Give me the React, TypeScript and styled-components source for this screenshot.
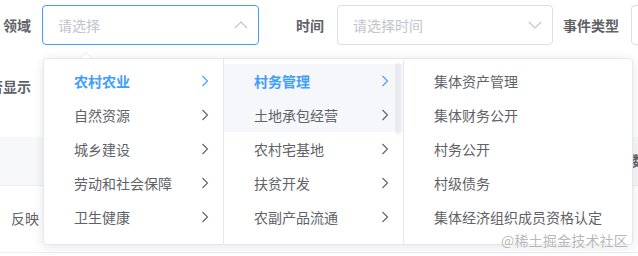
import React from "react";
import styled, { createGlobalStyle } from "styled-components";

const GlobalStyle = createGlobalStyle`
  html, body {
    margin: 0;
    padding: 0;
    background: #fff;
  }
  body {
    font-family: "Noto Sans CJK SC", "Noto Sans", sans-serif;
    font-size: 14px;
    color: #606266;
  }
`;

const Page = styled.div`
  position: relative;
  width: 638px;
  height: 256px;
  overflow: hidden;
`;

// filter bar
const FilterRow = styled.div`
  display: flex;
  align-items: center;
  height: 40px;
  padding-top: 5px;
`;

const Label = styled.span<any>`
  font-weight: 700;
  color: #606266;
  white-space: nowrap;
  margin-left: ${({ ml }) => ml || "0px"};
  margin-right: ${({ mr }) => mr || "12px"};
`;

const Select = styled.div<any>`
  box-sizing: border-box;
  display: flex;
  align-items: center;
  justify-content: space-between;
  flex-shrink: 0;
  width: ${({ width }) => width || "216px"};
  height: 40px;
  padding: 0 10px 0 15px;
  border: 1px solid ${({ focused }) => (focused ? "#409eff" : "#dcdfe6")};
  border-radius: 4px;
  color: #c0c4cc;
`;

const Placeholder = styled.span`
  color: #c0c4cc;
`;

// page behind the popper
const InfoRow = styled.div`
  height: 92px;
  display: flex;
  align-items: flex-start;
`;

const CutText = styled.span`
  margin-left: -25px;
  margin-top: 31px;
  font-weight: 700;
  color: #606266;
`;

const TableHead = styled.div`
  box-sizing: border-box;
  height: 49px;
  background: #f7f8fa;
  border-bottom: 1px solid #ebeef5;
  display: flex;
  align-items: center;
  justify-content: flex-end;
  color: #606266;
  font-weight: 700;
`;

const HeadCut = styled.span`
  margin-right: -8px;
  margin-top: -2px;
`;

const TableRow = styled.div`
  box-sizing: border-box;
  height: 67px;
  border-bottom: 1px solid #ebeef5;
  display: flex;
  align-items: center;
  padding-left: 11px;
  padding-bottom: 2px;
`;

// cascader popper
const Popper = styled.div`
  position: absolute;
  left: 43px;
  top: 58px;
  box-sizing: border-box;
  width: 590px;
  height: 187px;
  display: flex;
  background: #fff;
  border: 1px solid #e4e7ed;
  border-radius: 4px;
  box-shadow: 0 2px 12px 0 rgba(0, 0, 0, 0.1);
`;

const Arrow = styled.div`
  position: absolute;
  left: 36px;
  top: -7px;
  width: 0;
  height: 0;
  border-left: 6px solid transparent;
  border-right: 6px solid transparent;
  border-bottom: 6px solid #e4e7ed;
  &::after {
    content: "";
    position: absolute;
    left: -5px;
    top: 1px;
    border-left: 5px solid transparent;
    border-right: 5px solid transparent;
    border-bottom: 5px solid #fff;
  }
`;

const Menu = styled.div<any>`
  position: relative;
  box-sizing: border-box;
  width: ${({ width }) => width};
  height: 100%;
  overflow: hidden;
  border-right: ${({ last }) => (last ? "none" : "1px solid #e4e7ed")};
`;

const MenuList = styled.ul`
  list-style: none;
  margin: 0;
  padding: 5px 0;
`;

const Node = styled.li<any>`
  display: flex;
  align-items: center;
  justify-content: space-between;
  height: 34px;
  padding: 0 14px 0 30px;
  color: ${({ active }) => (active ? "#409eff" : "#606266")};
  font-weight: ${({ active }) => (active ? 700 : 400)};
  background: ${({ hover }) => (hover ? "#f5f7fa" : "transparent")};
  white-space: nowrap;
`;

const Thumb = styled.div`
  position: absolute;
  right: 2px;
  top: 4px;
  width: 6px;
  height: 72px;
  border-radius: 3px;
  background: rgba(144, 147, 153, 0.12);
`;

const Watermark = styled.div`
  position: absolute;
  right: 10px;
  bottom: 6px;
  font-size: 14px;
  line-height: 20px;
  color: rgba(160, 160, 160, 0.75);
  text-shadow: 0 0 2px #fff;
  letter-spacing: 0.2px;
`;

const Chevron = ({ dir, color }: { dir: "up" | "down" | "right"; color: string }) => {
  if (dir === "right") {
    return (
      <svg width="8" height="12" viewBox="0 0 8 12">
        <path d="M1.5 1 L6.5 6 L1.5 11" fill="none" stroke={color} strokeWidth="1.1" />
      </svg>
    );
  }
  const d = dir === "up" ? "M1 7 L7 1 L13 7" : "M1 1 L7 7 L13 1";
  return (
    <svg width="14" height="8" viewBox="0 0 14 8">
      <path d={d} fill="none" stroke={color} strokeWidth="1.1" />
    </svg>
  );
};

const col1 = ["农村农业", "自然资源", "城乡建设", "劳动和社会保障", "卫生健康"];
const col2 = ["村务管理", "土地承包经营", "农村宅基地", "扶贫开发", "农副产品流通", "农业生产"];
const col3 = ["集体资产管理", "集体财务公开", "村务公开", "村级债务", "集体经济组织成员资格认定", "其他"];

const App: React.FC = () => {
  return (
    <Page>
      <GlobalStyle />
      <FilterRow>
        <Label ml="3px" mr="11px">领域</Label>
        <Select width="217px" focused>
          <Placeholder>请选择</Placeholder>
          <Chevron dir="up" color="#c0c4cc" />
        </Select>
        <Label ml="37px" mr="13px">时间</Label>
        <Select width="216px">
          <Placeholder>请选择时间</Placeholder>
          <Chevron dir="down" color="#c0c4cc" />
        </Select>
        <Label ml="10px" mr="12px">事件类型</Label>
        <Select width="120px" />
      </FilterRow>

      <InfoRow>
        <CutText>是否显示</CutText>
      </InfoRow>
      <TableHead>
        <HeadCut>数</HeadCut>
      </TableHead>
      <TableRow>反映</TableRow>

      <Popper>
        <Arrow />
        <Menu width="180px">
          <MenuList>
            {col1.map((t, i) => (
              <Node key={t} active={i === 0}>
                <span>{t}</span>
                <Chevron dir="right" color={i === 0 ? "#409eff" : "#606266"} />
              </Node>
            ))}
          </MenuList>
        </Menu>
        <Menu width="180px">
          <MenuList>
            {col2.map((t, i) => (
              <Node key={t} active={i === 0} hover={i < 2}>
                <span>{t}</span>
                <Chevron dir="right" color={i === 0 ? "#409eff" : "#606266"} />
              </Node>
            ))}
          </MenuList>
          <Thumb />
        </Menu>
        <Menu width="228px" last>
          <MenuList>
            {col3.map((t) => (
              <Node key={t}>
                <span>{t}</span>
              </Node>
            ))}
          </MenuList>
        </Menu>
      </Popper>
      <Watermark>@稀土掘金技术社区</Watermark>
    </Page>
  );
};

export default App;
